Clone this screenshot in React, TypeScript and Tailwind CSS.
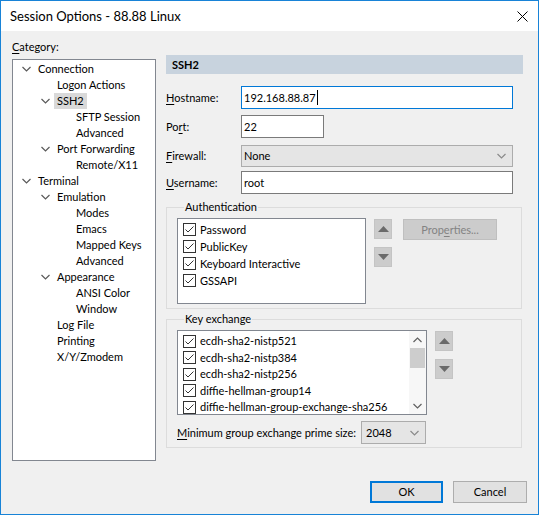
import React from "react";

type TreeItem = { label: string; level: number; open?: boolean; selected?: boolean };

const tree: TreeItem[] = [
  { label: "Connection", level: 0, open: true },
  { label: "Logon Actions", level: 1 },
  { label: "SSH2", level: 1, open: true, selected: true },
  { label: "SFTP Session", level: 2 },
  { label: "Advanced", level: 2 },
  { label: "Port Forwarding", level: 1, open: true },
  { label: "Remote/X11", level: 2 },
  { label: "Terminal", level: 0, open: true },
  { label: "Emulation", level: 1, open: true },
  { label: "Modes", level: 2 },
  { label: "Emacs", level: 2 },
  { label: "Mapped Keys", level: 2 },
  { label: "Advanced", level: 2 },
  { label: "Appearance", level: 1, open: true },
  { label: "ANSI Color", level: 2 },
  { label: "Window", level: 2 },
  { label: "Log File", level: 1 },
  { label: "Printing", level: 1 },
  { label: "X/Y/Zmodem", level: 1 },
];

const indent = ["pl-[9px]", "pl-[28px]", "pl-[47px]"];

function Chevron({ up = false, className = "" }: { up?: boolean; className?: string }) {
  return (
    <svg width="9" height="6" viewBox="0 0 9 6" className={className}>
      <polyline
        points={up ? "0.5,5 4.5,1 8.5,5" : "0.5,1 4.5,5 8.5,1"}
        fill="none"
        stroke="currentColor"
        strokeWidth="1.2"
      />
    </svg>
  );
}

function Check() {
  return (
    <span className="w-[13px] h-[13px] border border-[#333333] bg-white flex items-center justify-center shrink-0">
      <svg width="11" height="11" viewBox="0 0 11 11">
        <polyline points="1.5,5.5 4,8 9.5,2.5" fill="none" stroke="#333333" strokeWidth="1" />
      </svg>
    </span>
  );
}

function Arrow({ up = false }: { up?: boolean }) {
  return (
    <div className="w-[18px] h-[20px] bg-[#cccccc] border border-[#c4c4c4] flex items-center justify-center">
      <svg width="11" height="6" viewBox="0 0 11 6">
        <polygon points={up ? "0,6 5.5,0 11,6" : "0,0 5.5,6 11,0"} fill="#6a6a6a" />
      </svg>
    </div>
  );
}

function Key({ text, k }: { text: string; k: number }) {
  return (
    <>
      {text.slice(0, k)}
      <span className="underline underline-offset-2">{text[k]}</span>
      {text.slice(k + 1)}
    </>
  );
}

const auth = ["Password", "PublicKey", "Keyboard Interactive", "GSSAPI"];
const kex = [
  "ecdh-sha2-nistp521",
  "ecdh-sha2-nistp384",
  "ecdh-sha2-nistp256",
  "diffie-hellman-group14",
  "diffie-hellman-group-exchange-sha256",
];

export default function App() {
  return (
    <div
      className="w-[539px] h-[515px] border border-[#1883d7] flex flex-col text-[11px] text-black leading-[16px] overflow-hidden"
      style={{ fontFamily: "Lato, 'Noto Sans', sans-serif" }}
    >
      {/* Title bar */}
      <div className="h-[30px] bg-white flex items-center justify-between pl-[9px] pr-[10px] shrink-0">
        <span className="text-[13px]">Session Options - 88.88 Linux</span>
        <svg width="11" height="11" viewBox="0 0 11 11">
          <path d="M0.5 0.5 L10.5 10.5 M10.5 0.5 L0.5 10.5" stroke="#000" strokeWidth="1" />
        </svg>
      </div>

      <div className="flex-1 bg-[#f0f0f0] flex flex-col pt-[8px]">
        <div className="flex pl-[11px]">
          {/* Category tree */}
          <div className="flex flex-col w-[144px]">
            <div className="h-[16px]">
              <Key text="Category:" k={0} />
            </div>
            <div className="mt-[4px] h-[402px] border border-[#828790] bg-white pt-[1px]">
              {tree.map((t, i) => (
                <div key={i} className={`h-[16px] flex items-center ${indent[t.level]}`}>
                  <span className="w-[13px] flex items-center text-[#5a5a5a]">
                    {t.open && <Chevron />}
                  </span>
                  <span className={`px-[3px] ${t.selected ? "bg-[#d9d9d9]" : ""}`}>{t.label}</span>
                </div>
              ))}
            </div>
          </div>

          {/* Right panel */}
          <div className="ml-[10px] mt-[16px] w-[357px] flex flex-col">
            <div className="h-[19px] bg-[#c8d3de] pl-[6px] flex items-center font-bold">SSH2</div>

            <div className="mt-[12px] flex items-center">
              <span className="w-[75px]">
                <Key text="Hostname:" k={0} />
              </span>
              <div className="w-[272px] h-[23px] border border-[#0078d7] bg-white flex items-center px-[2px]">
                192.168.88.87<span className="w-[1px] h-[15px] bg-black ml-[1px]" />
              </div>
            </div>
            <div className="mt-[6px] flex items-center">
              <span className="w-[75px]">
                <Key text="Port:" k={2} />
              </span>
              <div className="w-[83px] h-[23px] border border-[#7a7a7a] bg-white flex items-center px-[2px]">
                22
              </div>
            </div>
            <div className="mt-[7px] flex items-center">
              <span className="w-[75px]">
                <Key text="Firewall:" k={0} />
              </span>
              <div className="w-[272px] h-[22px] border border-[#acacac] bg-[#e5e5e5] flex items-center justify-between pl-[2px] pr-[6px]">
                None
                <Chevron className="text-[#8a8a8a]" />
              </div>
            </div>
            <div className="mt-[4px] flex items-center">
              <span className="w-[75px]">
                <Key text="Username:" k={0} />
              </span>
              <div className="w-[272px] h-[23px] border border-[#7a7a7a] bg-white flex items-center px-[2px]">
                root
              </div>
            </div>

            {/* Authentication */}
            <fieldset className="mt-[5px] w-[356px] border border-[#dcdcdc] pl-[10px] pt-[3px] pb-[4px]">
              <legend className="ml-[7px] px-[1px] leading-[16px]">Authentication</legend>
              <div className="flex items-start">
                <div className="w-[189px] h-[86px] border border-[#828790] bg-white pt-[2px] pl-[5px]">
                  {auth.map((a) => (
                    <div key={a} className="h-[17px] flex items-center gap-[4px]">
                      <Check />
                      <span>{a}</span>
                    </div>
                  ))}
                </div>
                <div className="ml-[8px] mt-[1px] flex flex-col gap-[8px]">
                  <Arrow up />
                  <Arrow />
                </div>
                <div className="ml-[11px] mt-[1px] w-[94px] h-[21px] bg-[#cccccc] border border-[#bfbfbf] text-[#838383] flex items-center justify-center">
                  <Key text="Properties..." k={4} />
                </div>
              </div>
            </fieldset>

            {/* Key exchange */}
            <fieldset className="mt-[2px] w-[356px] border border-[#dcdcdc] pl-[10px] pt-[3px] pb-[3px]">
              <legend className="ml-[7px] px-[1px] leading-[16px]">Key exchange</legend>
              <div className="flex items-start">
                <div className="w-[250px] h-[85px] border border-[#828790] bg-white flex overflow-hidden">
                  <div className="flex-1 pt-[2px] pl-[5px] overflow-hidden">
                    {kex.map((a) => (
                      <div key={a} className="h-[16.5px] flex items-center gap-[4px] whitespace-nowrap">
                        <Check />
                        <span>{a}</span>
                      </div>
                    ))}
                  </div>
                  <div className="w-[17px] flex flex-col bg-[#f7f7f7] text-[#606060]">
                    <div className="h-[17px] flex items-center justify-center">
                      <Chevron up />
                    </div>
                    <div className="h-[20px] mx-[1px] bg-[#cdcdcd]" />
                    <div className="flex-1" />
                    <div className="h-[17px] flex items-center justify-center">
                      <Chevron />
                    </div>
                  </div>
                </div>
                <div className="ml-[8px] mt-[1px] flex flex-col gap-[8px]">
                  <Arrow up />
                  <Arrow />
                </div>
              </div>
              <div className="mt-[6px] flex items-center">
                <span className="w-[184px] whitespace-nowrap">
                  <Key text="Minimum group exchange prime size:" k={0} />
                </span>
                <div className="w-[65px] h-[23px] border border-[#acacac] bg-[#e5e5e5] flex items-center justify-between pl-[4px] pr-[6px]">
                  2048
                  <Chevron className="text-[#8a8a8a]" />
                </div>
              </div>
            </fieldset>
          </div>
        </div>

        {/* Footer buttons */}
        <div className="mt-[20px] flex justify-end gap-[10px] pr-[11px]">
          <button className="w-[73px] h-[22px] border-2 border-[#0078d7] bg-[#e1e1e1] flex items-center justify-center">
            OK
          </button>
          <button className="w-[74px] h-[22px] border border-[#adadad] bg-[#e1e1e1] flex items-center justify-center">
            Cancel
          </button>
        </div>
      </div>
    </div>
  );
}
